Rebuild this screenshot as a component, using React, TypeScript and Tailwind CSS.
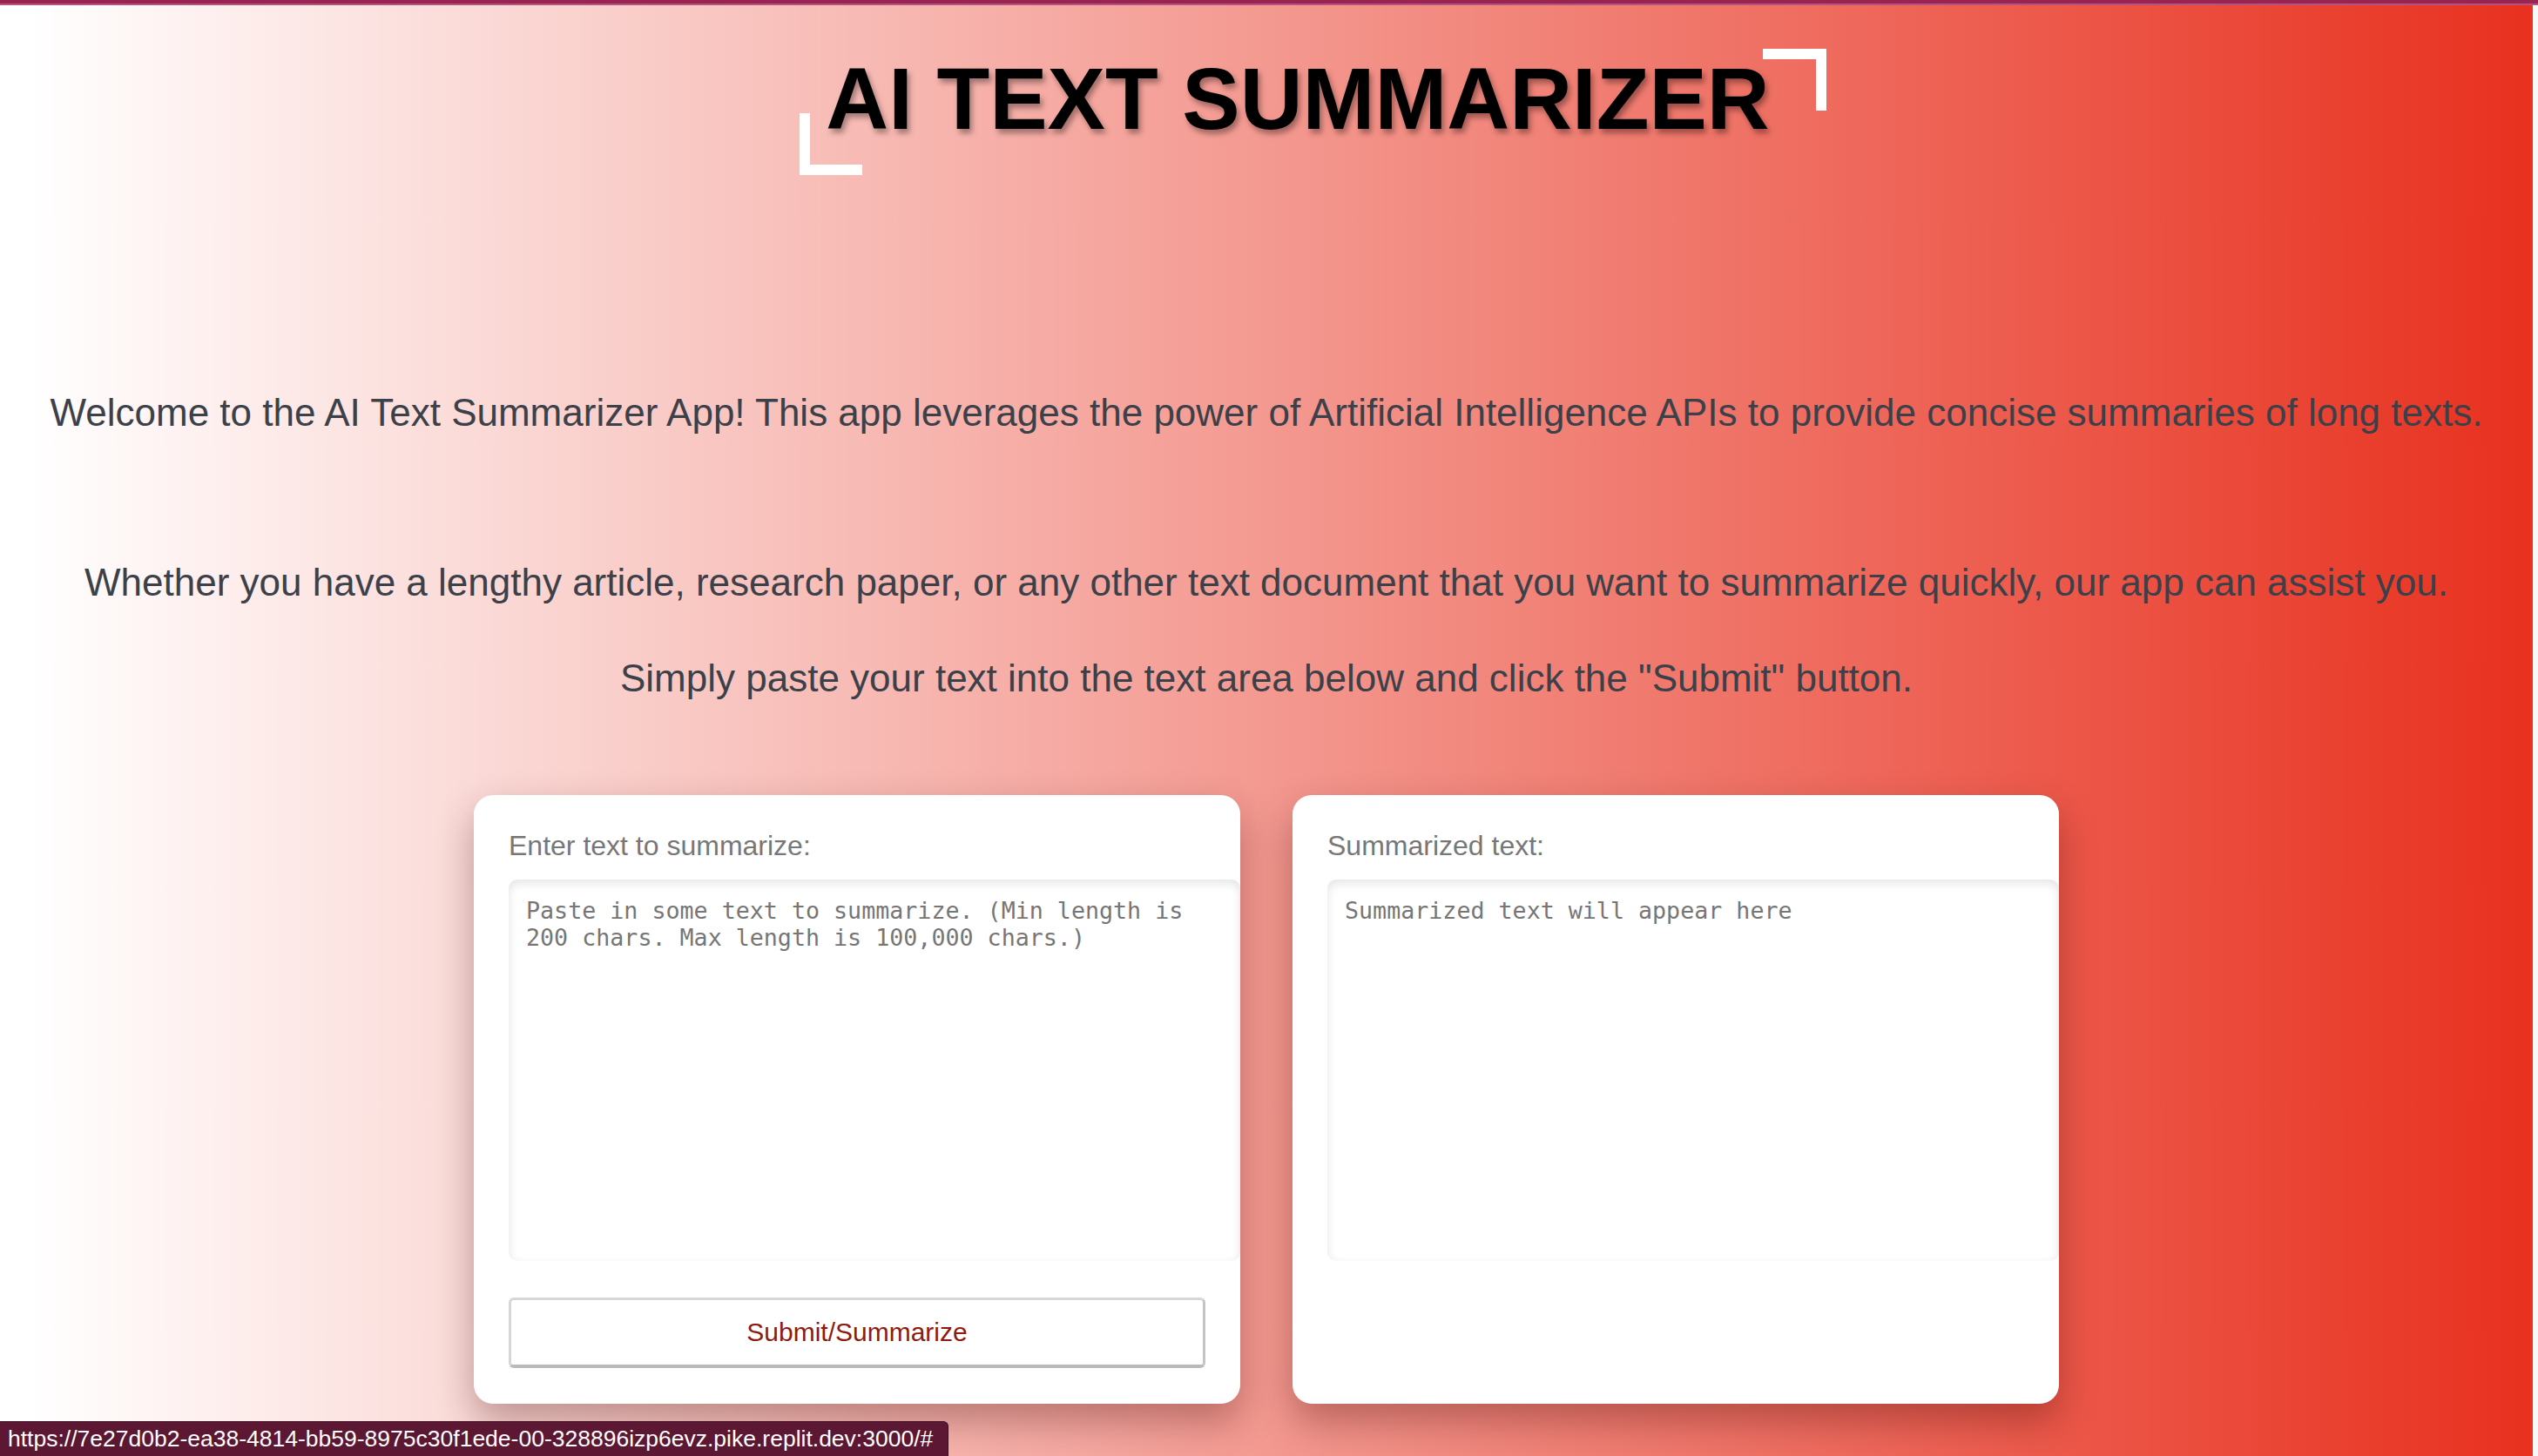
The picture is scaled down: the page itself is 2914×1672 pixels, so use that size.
import React from 'react';

const SANS = { fontFamily: '"Liberation Sans", Arial, Helvetica, sans-serif' };

function Card({ label, placeholder, children }: { label: string; placeholder: string; children?: React.ReactNode }) {
  return (
    <div className="flex w-[880px] flex-col overflow-hidden rounded-[22px] bg-white pb-[41px] pl-[40px] pt-[40px] shadow-[0_20px_45px_rgba(60,0,0,0.32)]">
      <label className="mb-[20px] text-[32px] leading-[37px] text-[#777777]">{label}</label>
      <textarea
        readOnly
        placeholder={placeholder}
        className="h-[438px] w-[840px] shrink-0 resize-none rounded-[10px] bg-white p-[20px] font-['DejaVu_Sans_Mono',monospace] text-[26.67px] leading-[31px] text-[#333] shadow-[inset_0_4px_12px_rgba(0,0,0,0.11)] outline-none placeholder:text-[#767676]"
      />
      {children}
    </div>
  );
}

export default function App() {
  return (
    <div className="relative flex h-screen flex-col overflow-hidden" style={SANS}>
      <div className="h-[4px] shrink-0 bg-[#992452]" />
      <div className="h-[2px] shrink-0 bg-[#b5527e]" />
      <div className="flex min-h-0 flex-1">
        <main className="flex flex-1 flex-col bg-[linear-gradient(to_right,#ffffff_1%,#e8311f)]">
          <div className="flex justify-center pt-[58px]">
            <h1 className="relative ml-[72px] text-[99.5px] font-bold leading-none text-black [text-shadow:3px_5px_6px_rgba(0,0,0,0.35)]">
              AI TEXT SUMMARIZER
              <span className="absolute left-[-30px] top-[66px] h-[71px] w-[72px] border-b-[12px] border-l-[12px] border-white" />
              <span className="absolute right-[-65px] top-[-8px] h-[71px] w-[73px] border-r-[12px] border-t-[12px] border-white" />
            </h1>
          </div>

          <div className="mt-[277px] flex flex-col items-center text-center text-[44px] leading-[66px] text-[#3c4049]">
            <p>
              Welcome to the AI Text Summarizer App! This app leverages the power of Artificial Intelligence APIs to provide concise summaries of long texts.
            </p>
            <p className="mt-[129px]">
              Whether you have a lengthy article, research paper, or any other text document that you want to summarize quickly, our app can assist you.
            </p>
            <p className="mt-[44px]">Simply paste your text into the text area below and click the "Submit" button.</p>
          </div>

          <div className="mt-[101px] flex justify-center gap-[60px]">
            <Card label="Enter text to summarize:" placeholder="Paste in some text to summarize. (Min length is 200 chars. Max length is 100,000 chars.)">
              <button
                type="button"
                className="mt-[42px] h-[81px] w-[800px] rounded-[6px] border-[3px] border-b-[4px] border-b-[#bababa] border-l-[#d6d6d6] border-r-[#c4c4c4] border-t-[#d6d6d6] bg-white text-[30px] text-[#8e1a10]"
              >
                Submit/Summarize
              </button>
            </Card>
            <Card label="Summarized text:" placeholder="Summarized text will appear here" />
          </div>
        </main>
        <div className="w-[6px] shrink-0 bg-[#f7f7f7]" />
      </div>

      <div className="absolute bottom-0 left-0 flex h-[40px] w-[1089px] items-center rounded-tr-[6px] border-r border-t border-[#3b0d1f] bg-[#5c1733] px-[9px] text-[26.5px] text-white">
        https://7e27d0b2-ea38-4814-bb59-8975c30f1ede-00-328896izp6evz.pike.replit.dev:3000/#
      </div>
    </div>
  );
}
